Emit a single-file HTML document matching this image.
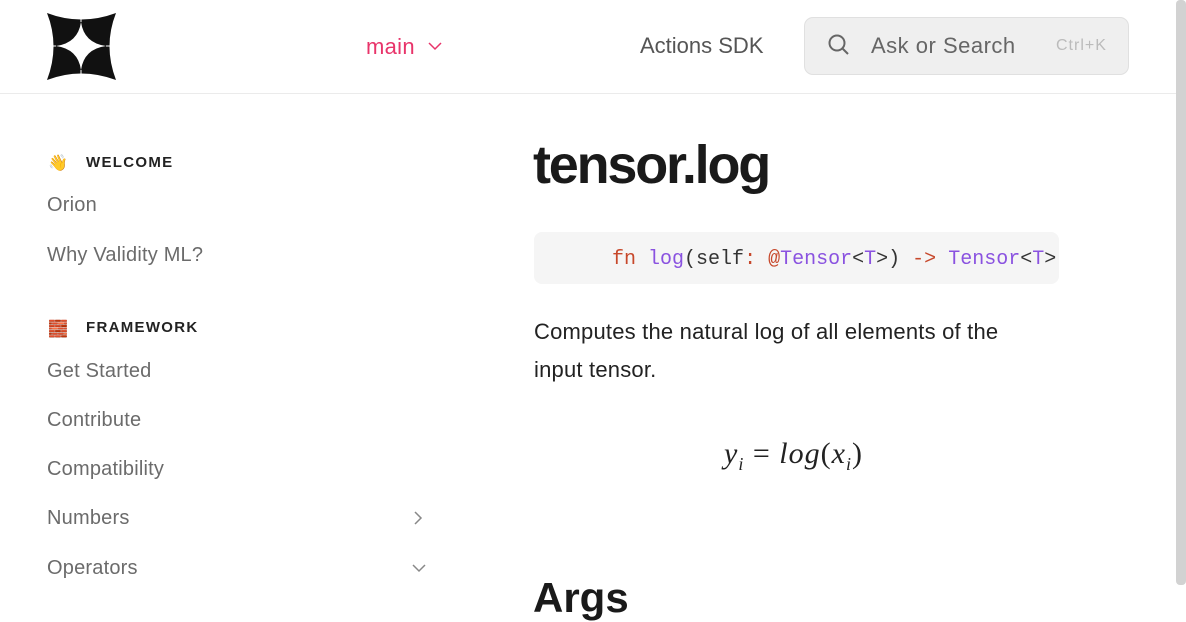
<!DOCTYPE html>
<html><head><style>
*{margin:0;padding:0;box-sizing:border-box}
body{width:1186px;height:600px;overflow:hidden;background:#fff;font-family:"Liberation Sans",sans-serif;position:relative;color:#222}
.a{position:absolute;white-space:nowrap}
.hdr{position:absolute;left:0;top:0;width:1176px;height:94px;border-bottom:1px solid #ebebeb}
.side{font-size:20px;color:#6b6b6b;letter-spacing:.2px}
.sec{font-size:15px;font-weight:bold;letter-spacing:1.3px;color:#222}
.code{font-family:"Liberation Mono",monospace;font-size:20px}
</style></head><body>
<div class="hdr"></div>
<svg class="a" style="left:0;top:0" width="130" height="94">
<path d="M47,13 Q81,26 116,13 Q103,46 116,80 Q81,67 47,80 Q60,46 47,13Z" fill="#111"/>
<path d="M81,22 Q84,43 106,46 Q84,49 81,70 Q78,49 56,46 Q78,43 81,22Z" fill="#fff"/>
<path d="M81,15 V22 M81,70 V78 M49,46 H56 M106,46 H114" stroke="#fff" stroke-width="1"/>
</svg>
<div class="a" style="left:366px;top:34px;font-size:22px;color:#e8346a;letter-spacing:.3px">main</div>
<svg class="a" style="left:428px;top:41px" width="14" height="10"><path d="M1,2 L7,8 L13,2" fill="none" stroke="#e8346a" stroke-width="1.5"/></svg>
<div class="a" style="left:640px;top:33px;font-size:22px;color:#555">Actions SDK</div>
<div class="a" style="left:804px;top:17px;width:325px;height:58px;background:#efefef;border:1px solid #e0e0e0;border-radius:9px"></div>
<svg class="a" style="left:827px;top:33px" width="24" height="24"><circle cx="10" cy="10" r="7.5" fill="none" stroke="#666" stroke-width="2"/><path d="M15.5,15.5 L21,21" stroke="#666" stroke-width="2"/></svg>
<div class="a" style="left:871px;top:33px;font-size:22px;color:#666;letter-spacing:.5px">Ask or Search</div>
<div class="a" style="left:1056px;top:37px;font-size:16px;color:#bbb;letter-spacing:1px">Ctrl+K</div>
<div class="a" style="left:1176px;top:0;width:10px;height:585px;background:#d2d2d2;border-radius:4px"></div>

<div class="a" style="left:48px;top:153px;font-size:16px">👋</div>
<div class="a sec" style="left:86px;top:154px">WELCOME</div>
<div class="a side" style="left:47px;top:194px">Orion</div>
<div class="a side" style="left:47px;top:244px">Why Validity ML?</div>
<div class="a" style="left:48px;top:319px;font-size:16px">🧱</div>
<div class="a sec" style="left:86px;top:319px">FRAMEWORK</div>
<div class="a side" style="left:47px;top:360px">Get Started</div>
<div class="a side" style="left:47px;top:409px">Contribute</div>
<div class="a side" style="left:47px;top:458px">Compatibility</div>
<div class="a side" style="left:47px;top:507px">Numbers</div>
<svg class="a" style="left:411px;top:510px" width="14" height="16"><path d="M4,2 L10,8 L4,14" fill="none" stroke="#888" stroke-width="1.5"/></svg>
<div class="a side" style="left:47px;top:557px">Operators</div>
<svg class="a" style="left:411px;top:562px" width="16" height="12"><path d="M2,3 L8,9 L14,3" fill="none" stroke="#888" stroke-width="1.5"/></svg>

<div class="a" style="left:533px;top:134px;font-size:54px;font-weight:bold;letter-spacing:-2.2px;color:#1a1a1a">tensor.log</div>
<div class="a" style="left:534px;top:232px;width:525px;height:52px;background:#f5f5f5;border-radius:8px;overflow:hidden">
<div class="a code" style="left:78px;top:16px;color:#333"><span style="color:#c7482b">fn</span> <span style="color:#8a52e0">log</span>(self<span style="color:#c7482b">:</span> <span style="color:#c7482b">@</span><span style="color:#8a52e0">Tensor</span>&lt;<span style="color:#8a52e0">T</span>&gt;) <span style="color:#c7482b">-&gt;</span> <span style="color:#8a52e0">Tensor</span>&lt;<span style="color:#8a52e0">T</span>&gt;</div></div>
<div class="a" style="left:534px;top:313px;font-size:22px;line-height:38px;color:#222;white-space:normal;width:515px;letter-spacing:.2px">Computes the natural log of all elements of the input tensor.</div>
<div class="a" style="left:724px;top:437px;font-family:'Liberation Serif',serif;font-size:30px;font-style:italic;color:#222;letter-spacing:1px">y<sub style="font-size:18px">i</sub> <span style="font-style:normal">=</span> log<span style="font-style:normal">(</span>x<sub style="font-size:18px">i</sub><span style="font-style:normal">)</span></div>
<div class="a" style="left:533px;top:574px;font-size:42px;font-weight:bold;color:#1a1a1a">Args</div>
</body></html>
